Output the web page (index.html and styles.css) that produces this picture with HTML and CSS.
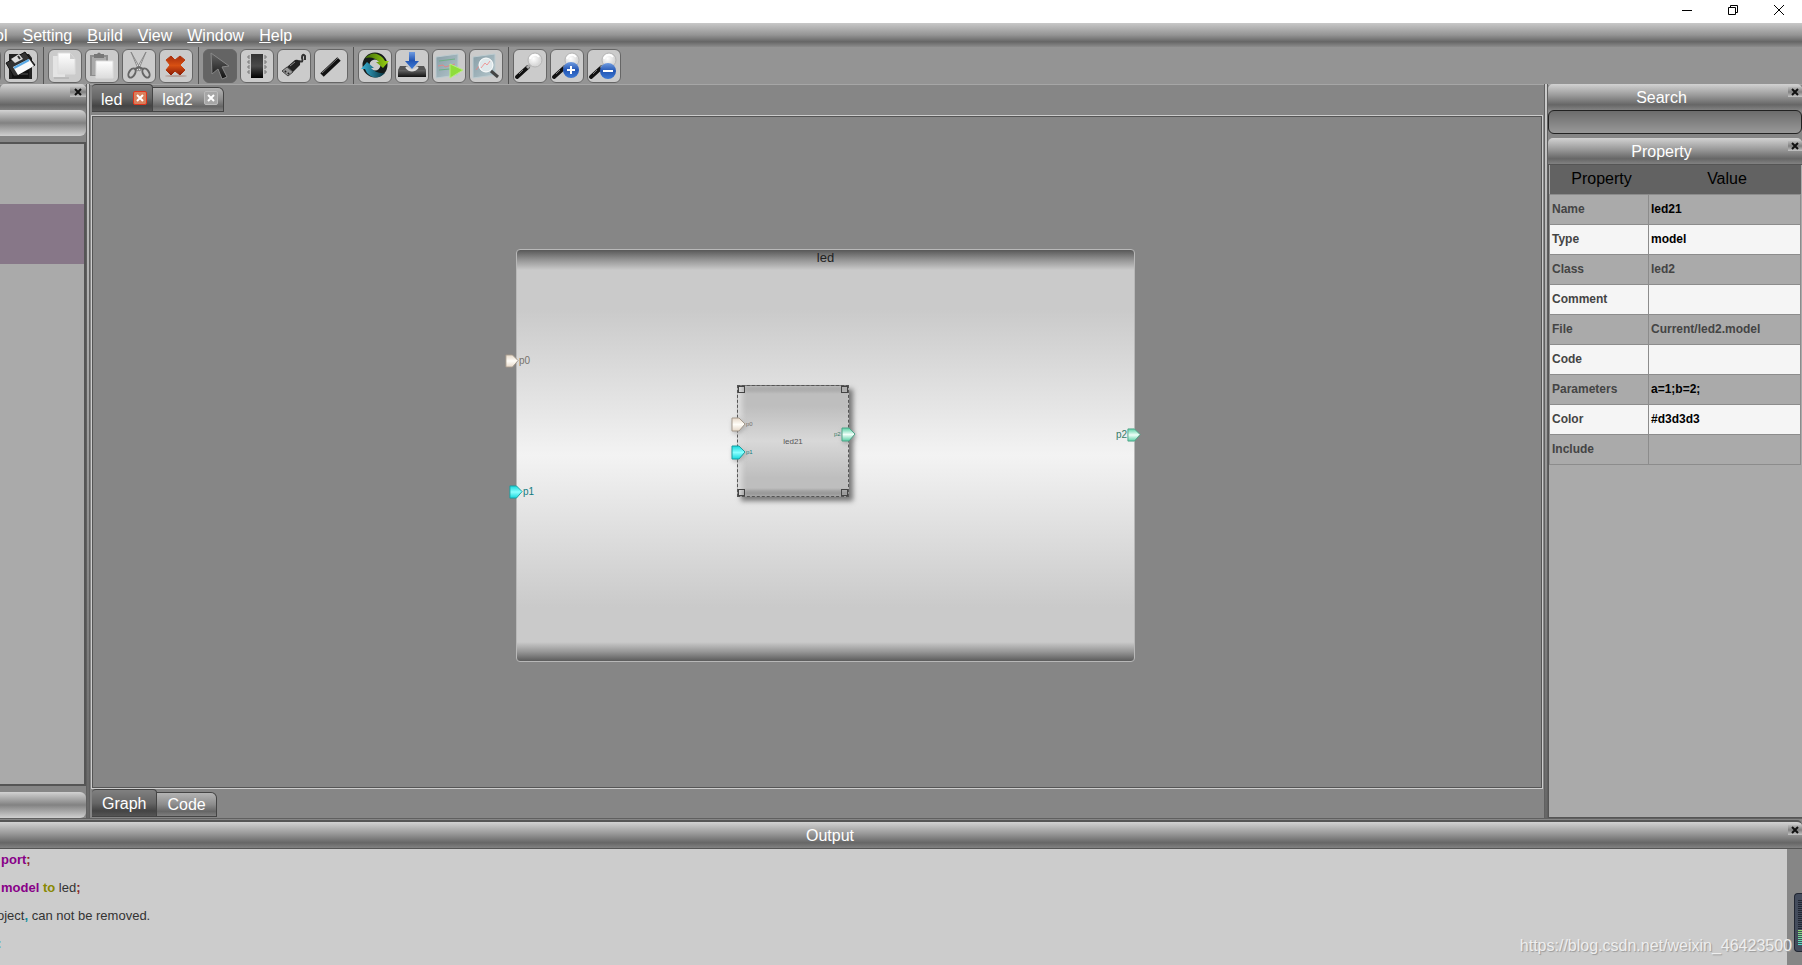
FILE: index.html
```html
<!DOCTYPE html>
<html lang="en">
<head>
    <meta charset="UTF-8">
    <meta name="viewport" content="width=device-width, initial-scale=1.0">
    <title>led</title>
    <link rel="stylesheet" href="styles.css">
</head>
<body>
    <!-- shared gradients and shapes -->
    <svg class="defs" aria-hidden="true">
        <defs>
            <linearGradient id="paper" x1="0" y1="0" x2="0" y2="1"><stop offset="0" stop-color="#fff"/><stop offset="1" stop-color="#dcdcdc"/></linearGradient>
            <linearGradient id="red" x1="0" y1="0" x2="0" y2="1"><stop offset="0" stop-color="#a82e0c"/><stop offset=".5" stop-color="#d85012"/><stop offset="1" stop-color="#8c1c06"/></linearGradient>
            <linearGradient id="dark" x1="0" y1="0" x2="0" y2="1"><stop offset="0" stop-color="#666"/><stop offset="1" stop-color="#111"/></linearGradient>
            <linearGradient id="chip" x1="0" y1="0" x2="0" y2="1"><stop offset="0" stop-color="#333"/><stop offset=".5" stop-color="#4a4a4a"/><stop offset="1" stop-color="#000"/></linearGradient>
            <linearGradient id="blue" x1="0" y1="0" x2="0" y2="1"><stop offset="0" stop-color="#6f9be0"/><stop offset=".5" stop-color="#2356b4"/><stop offset="1" stop-color="#3d79d4"/></linearGradient>
            <linearGradient id="green" x1="0" y1="0" x2="1" y2="0"><stop offset="0" stop-color="#3f6b06"/><stop offset="1" stop-color="#9ad413"/></linearGradient>
            <linearGradient id="teal" x1="0" y1="0" x2="1" y2="0"><stop offset="0" stop-color="#3bb4d8"/><stop offset="1" stop-color="#06323f"/></linearGradient>
            <linearGradient id="chart" x1="0" y1="0" x2="1" y2="1"><stop offset="0" stop-color="#879da6"/><stop offset="1" stop-color="#b4c6cc"/></linearGradient>
            <radialGradient id="lens" cx=".4" cy=".4"><stop offset="0" stop-color="#fff"/><stop offset="1" stop-color="#d8d8d8"/></radialGradient>
            <linearGradient id="pinCream" x1="0" y1="0" x2="0" y2="1"><stop offset="0" stop-color="#e6d8c8"/><stop offset=".5" stop-color="#fffdf8"/><stop offset="1" stop-color="#e6d8c8"/></linearGradient>
            <linearGradient id="pinCyan" x1="0" y1="0" x2="0" y2="1"><stop offset="0" stop-color="#14d8dc"/><stop offset=".5" stop-color="#8bffff"/><stop offset="1" stop-color="#14d8dc"/></linearGradient>
            <linearGradient id="pinGreen" x1="0" y1="0" x2="0" y2="1"><stop offset="0" stop-color="#58cfa4"/><stop offset=".5" stop-color="#f0fff9"/><stop offset="1" stop-color="#58cfa4"/></linearGradient>
            <symbol id="glass" viewBox="0 0 32 32">
                <path d="M3 27L14 17" stroke="#111" stroke-width="4" stroke-linecap="round"/>
                <path d="M5 24L9 20" stroke="#777" stroke-width="1"/>
                <path d="M13 18L16 15" stroke="#aaa" stroke-width="3"/>
                <circle cx="21" cy="10" r="7" fill="url(#lens)" stroke="#b4b4b4"/>
                <path d="M16 9A5 5 0 0 1 25 7" fill="none" stroke="#fff" stroke-width="2"/>
            </symbol>
        </defs>
    </svg>

    <header class="titlebar">
        <button class="win-btn" aria-label="Minimize"><svg width="12" height="12"><path d="M1 6.500H11" stroke="#000"/></svg></button>
        <button class="win-btn" aria-label="Restore"><svg width="12" height="12"><path d="M1.500 3.500H8.500V10.500H1.500ZM3.500 3V1.500H10.500V8.500H9" fill="none" stroke="#000"/></svg></button>
        <button class="win-btn" aria-label="Close"><svg width="12" height="12"><path d="M1 1L11 11M11 1L1 11" stroke="#000"/></svg></button>
    </header>

    <nav class="menubar">
        <button>ol</button>
        <button><u>S</u>etting</button>
        <button><u>B</u>uild</button>
        <button><u>V</u>iew</button>
        <button><u>W</u>indow</button>
        <button><u>H</u>elp</button>
    </nav>

    <div class="toolbar">
        <button aria-label="Save"></button>
        <button aria-label="Save all">
            <svg viewBox="0 0 32 32"><path d="M4 4H24L27 8V29H4Z" fill="#222"/><path d="M7 20H24V28H7Z" fill="#111"/><path d="M9 24H23" stroke="#555"/><path d="M1 13L20 2L30 15L12 26Q9 27 8 25Z" fill="#333" stroke="#111"/><path d="M6 9L14 4L18 9L10 13Z" fill="#ddd"/><path d="M13 6L15 9" stroke="#333" stroke-width="2"/><path d="M8 17L24 9L29 16L13 25Z" fill="#fafafa"/><path d="M9 18L24 10" stroke="#5aaae6" stroke-width="2"/></svg>
        </button>
        <span class="sep"></span>
        <button aria-label="Copy">
            <svg viewBox="0 0 32 32"><path d="M4 6H16V27H4Z" fill="#e4e4e4"/><path d="M5 28H20" stroke="#aaa"/><path d="M9 3H21L26 9V24H9Z" fill="url(#paper)" stroke="#ddd"/><path d="M21 3V9H26Z" fill="#ccc"/></svg>
        </button>
        <button aria-label="Paste">
            <svg viewBox="0 0 32 32"><path d="M4 5H22V26H4Z" fill="#8d8d8d"/><path d="M6 7H20V25H6Z" fill="#aaa"/><path d="M8 4H11Q13 1 15 4H18V8H8Z" fill="#777"/><path d="M10 11H27V28H10Z" fill="url(#paper)" stroke="#ddd"/></svg>
        </button>
        <button aria-label="Cut">
            <svg viewBox="0 0 32 32"><path d="M8 2L18 20L16 21ZM23 2L13 20L15 21Z" fill="#eee" stroke="#888"/><g fill="none" stroke="#666" stroke-width="2"><ellipse cx="9" cy="23" rx="3" ry="5" transform="rotate(30 9 23)"/><ellipse cx="23" cy="23" rx="3" ry="5" transform="rotate(-30 23 23)"/><path d="M12 19L16 17L20 19"/></g></svg>
        </button>
        <button aria-label="Delete">
            <svg viewBox="0 0 32 32"><ellipse cx="16" cy="26" rx="11" ry="1" fill="#b5a09a"/><path d="M11 6L15 10L20 6L25 10L20 15L25 20L20 25L15 21L11 25L6 20L10 15L6 10Z" fill="url(#red)" stroke="url(#red)" stroke-linejoin="round"/></svg>
        </button>
        <span class="sep"></span>
        <button class="active" aria-label="Select">
            <svg viewBox="0 0 32 32"><path d="M7 3L25 16L18 17L23 27L18 29L14 19L8 24Z" fill="url(#dark)" stroke="#888"/></svg>
        </button>
        <button aria-label="Module">
            <svg viewBox="0 0 32 32"><path d="M10 4H22V28H10Z" fill="url(#chip)"/><path d="M9 6H7V8H9M9 11H7V13H9M9 16H7V18H9M9 21H7V23H9M23 6H25V8H23M23 11H25V13H23M23 16H25V18H23M23 21H25V23H23" fill="none" stroke="#777"/></svg>
        </button>
        <button aria-label="Port">
            <svg viewBox="0 0 32 32"><path d="M21 11Q26 13 24 8Q24 3 27 6V10" fill="none" stroke="#333" stroke-width="2"/><path d="M9 17L17 10Q23 9 22 15L15 22Z" fill="#222"/><path d="M4 21L9 17L15 22L10 26Z" fill="#999" stroke="#444"/><path d="M7 22L8 21M10 24L11 23" stroke="#222" stroke-width="2"/><path d="M12 16L17 12" stroke="#888"/></svg>
        </button>
        <button aria-label="Link">
            <svg viewBox="0 0 32 32"><path d="M7 25L24 9" stroke="#111" stroke-width="5"/><path d="M7 23L23 8" stroke="#777"/></svg>
        </button>
        <span class="sep"></span>
        <button aria-label="Refresh">
            <svg viewBox="0 0 32 32"><circle cx="16" cy="15" r="9" fill="none" stroke="#151b1b" stroke-width="7"/><path d="M6 8Q15-1 24 8L26 11H30L24 18L17 12H20Q15 6 6 8Z" fill="url(#green)"/><path d="M26 23Q17 32 8 23L6 19H2L8 12L15 18H12Q17 24 26 23Z" fill="url(#teal)"/></svg>
        </button>
        <button aria-label="Import">
            <svg viewBox="0 0 32 32"><path d="M4 16H11Q16 25 21 16H28L30 20H2Z" fill="#555"/><path d="M2 20H30V27H2Z" fill="url(#dark)"/><path d="M10 17Q16 24 22 17" fill="none" stroke="#ddd" stroke-width="2"/><path d="M13 2H19V11H23L16 19L9 11H13Z" fill="url(#blue)"/></svg>
        </button>
        <button aria-label="Run">
            <svg viewBox="0 0 32 32"><path d="M3 7L25 4V25L3 28Z" fill="url(#chart)" stroke="#bccbd0"/><path d="M6 11L22 9M6 20L17 19" stroke="#6faf84"/><path d="M5 16L10 15L12 17L22 14" fill="none" stroke="#d88"/><path d="M17 14L30 20L17 28Z" fill="#8fdd3c" stroke="#b8ee7c"/></svg>
        </button>
        <button aria-label="Inspect">
            <svg viewBox="0 0 32 32"><path d="M3 7L25 4V25L3 28Z" fill="url(#chart)" stroke="#bccbd0"/><path d="M6 20L10 15L13 18" fill="none" stroke="#d88"/><circle cx="16" cy="15" r="7" fill="#dfe8eb" stroke="#fff"/><path d="M11 18L15 13L17 15L20 11" fill="none" stroke="#e99"/><path d="M21 21L28 27" stroke="#444" stroke-width="3"/></svg>
        </button>
        <span class="sep"></span>
        <button aria-label="Zoom"><svg viewBox="0 0 32 32"><use href="#glass"/></svg></button>
        <button aria-label="Zoom in"><svg viewBox="0 0 32 32"><use href="#glass"/><circle cx="20" cy="20" r="8" fill="url(#blue)"/><path d="M20 16V24M16 20H24" stroke="#fff" stroke-width="2"/></svg></button>
        <button aria-label="Zoom out"><svg viewBox="0 0 32 32"><use href="#glass"/><circle cx="20" cy="21" r="8" fill="url(#blue)"/><path d="M15 21H25" stroke="#fff" stroke-width="2"/></svg></button>
    </div>

    <main class="workspace">
        <aside class="left-dock">
            <div class="dock-title"><button class="dock-close" aria-label="Close panel"><svg width="8" height="8"><path d="M1 1L7 7M7 1L1 7" stroke="#111" stroke-width="2"/></svg></button></div>
            <button class="toolbox-head" aria-label="Toolbox section"></button>
            <div class="toolbox-list"><div class="toolbox-item selected"></div></div>
            <button class="toolbox-head" aria-label="Toolbox section"></button>
        </aside>
        <div class="splitter"></div>

        <section class="editor">
            <div class="tabs top">
                <div class="tab active"><button class="tab-label">led</button><button class="tab-close" aria-label="Close led"><svg width="8" height="8"><path d="M1 1L7 7M7 1L1 7" stroke="#fff" stroke-width="2"/></svg></button></div>
                <div class="tab"><button class="tab-label">led2</button><button class="tab-close" aria-label="Close led2"><svg width="8" height="8"><path d="M1 1L7 7M7 1L1 7" stroke="#fff" stroke-width="2"/></svg></button></div>
            </div>
            <div class="canvas">
                <div class="model">
                    <div class="model-title">led</div>
                </div>
                <div class="pin model-p0 cream"><svg viewBox="0 0 15 15"><path d="M1 1H8L14 7L8 14H1Z" fill="url(#pinCream)" stroke="#a3988b"/></svg>p0</div>
                <div class="pin model-p1 cyan"><svg viewBox="0 0 15 15"><path d="M1 1H8L14 7L8 14H1Z" fill="url(#pinCyan)" stroke="#1a9da0"/></svg>p1</div>
                <div class="pin model-p2 green">p2<svg viewBox="0 0 15 15"><path d="M1 1H8L14 7L8 14H1Z" fill="url(#pinGreen)" stroke="#4fa488"/></svg></div>
                <div class="instance">
                    <span>led21</span>
                    <i class="handle nw"></i><i class="handle ne"></i><i class="handle sw"></i><i class="handle se"></i>
                </div>
                <div class="pin small inst-p0 cream"><svg viewBox="0 0 15 15"><path d="M1 1H8L14 7L8 14H1Z" fill="url(#pinCream)" stroke="#a3988b"/></svg>p0</div>
                <div class="pin small inst-p1 cyan"><svg viewBox="0 0 15 15"><path d="M1 1H8L14 7L8 14H1Z" fill="url(#pinCyan)" stroke="#1a9da0"/></svg>p1</div>
                <div class="pin small inst-p2 green">p2<svg viewBox="0 0 15 15"><path d="M1 1H8L14 7L8 14H1Z" fill="url(#pinGreen)" stroke="#4fa488"/></svg></div>
            </div>
            <div class="tabs bottom">
                <div class="tab active"><button class="tab-label">Graph</button></div>
                <div class="tab"><button class="tab-label">Code</button></div>
            </div>
        </section>
        <div class="splitter"></div>

        <aside class="right-dock">
            <div class="dock-title"><label for="search">Search</label><button class="dock-close" aria-label="Close search"><svg width="8" height="8"><path d="M1 1L7 7M7 1L1 7" stroke="#111" stroke-width="2"/></svg></button></div>
            <input id="search" class="search" type="text">
            <div class="dock-title">Property<button class="dock-close" aria-label="Close property"><svg width="8" height="8"><path d="M1 1L7 7M7 1L1 7" stroke="#111" stroke-width="2"/></svg></button></div>
            <div class="property">
                <table>
                    <thead><tr><th>Property</th><th>Value</th></tr></thead>
                    <tbody>
                        <tr><td>Name</td><td>led21</td></tr>
                        <tr><td>Type</td><td>model</td></tr>
                        <tr><td>Class</td><td class="readonly">led2</td></tr>
                        <tr><td>Comment</td><td></td></tr>
                        <tr><td>File</td><td class="readonly">Current/led2.model</td></tr>
                        <tr><td>Code</td><td></td></tr>
                        <tr><td>Parameters</td><td>a=1;b=2;</td></tr>
                        <tr><td>Color</td><td>#d3d3d3</td></tr>
                        <tr><td>Include</td><td></td></tr>
                    </tbody>
                </table>
            </div>
        </aside>
    </main>

    <section class="output">
        <div class="dock-title">Output<button class="dock-close" aria-label="Close output"><svg width="8" height="8"><path d="M1 1L7 7M7 1L1 7" stroke="#111" stroke-width="2"/></svg></button></div>
        <div class="output-body">
            <div class="log">
                <p><b class="kw">port</b><b class="semi">;</b></p>
                <p><b class="kw">model</b> <b class="to">to</b> led<b class="semi">;</b></p>
                <p class="cut">oject<b class="punct">,</b> can not be removed.</p>
                <p class="cut"><b class="punct">:</b></p>
            </div>
            <div class="scrollbar"><div class="meter"></div></div>
        </div>
        <div class="watermark">https://blog.csdn.net/weixin_46423500</div>
    </section>
</body>
</html>
```
FILE: styles.css
```css
* {
    box-sizing: border-box;
}

body {
    font-family: "Liberation Sans", Arial, sans-serif;
    font-size: 16px;
    margin: 0;
    height: 100vh;
    display: flex;
    flex-direction: column;
    overflow: hidden;
    background-color: #868686;
    color: #fff;
}

button {
    font: inherit;
    color: inherit;
    background: none;
    border: none;
    padding: 0;
    margin: 0;
}

.defs {
    position: absolute;
    width: 0;
    height: 0;
}

/* window frame */
.titlebar {
    height: 23px;
    flex: none;
    display: flex;
    justify-content: flex-end;
    background: #fff;
}

.win-btn {
    width: 46px;
    height: 20px;
    display: flex;
    align-items: center;
    justify-content: center;
}

.menubar {
    height: 24px;
    flex: none;
    display: flex;
    align-items: center;
    gap: 15px;
    padding-top: 1px;
    margin-left: -5px;
    background: linear-gradient(#c8c8c8, #949494 50%, #666 78%, #8c8c8c);
}

.toolbar {
    height: 38px;
    flex: none;
    display: flex;
    align-items: center;
    gap: 3px;
    margin-left: -33px;
    background: #949494;
    border-bottom: 1px solid #a6a6a6;
}

.toolbar button {
    width: 34px;
    height: 34px;
    border: 1px solid #666;
    border-radius: 6px;
    background: #cbcbcb;
}

.toolbar button.active {
    background: #646464;
}

.toolbar svg {
    display: block;
    width: 32px;
    height: 32px;
}

.sep {
    width: 1px;
    height: 37px;
    margin: 0 1px 0 2px;
    background: #555;
}

/* docks */
.workspace {
    flex: 1;
    min-height: 0;
    display: flex;
    margin-top: -1px;
}

.dock-title {
    position: relative;
    height: 26px;
    flex: none;
    display: flex;
    align-items: center;
    justify-content: center;
    padding: 1px 27px 0 0;
    border-radius: 5px 5px 0 0;
    background: linear-gradient(#d2d2d2, #989898 45%, #666 80%, #828282);
}

.dock-close {
    position: absolute;
    right: 0;
    top: 3px;
    width: 14px;
    height: 10px;
    display: flex;
    align-items: center;
    justify-content: center;
    background: linear-gradient(#bbb, #808080 50%, #c4c4c4);
}

.left-dock {
    width: 86px;
    display: flex;
    flex-direction: column;
}

.left-dock .dock-close {
    width: 16px;
}

.toolbox-head {
    height: 26px;
    flex: none;
    border-radius: 0 6px 6px 0;
    background: linear-gradient(#d2d2d2, #828282 50%, #9a9a9a 65%, #d0d0d0);
}

.toolbox-list {
    flex: 1;
    margin: 6px 0;
    padding-top: 60px;
    background: #aaa;
    border: 2px solid #555;
    border-left: none;
}

.toolbox-item.selected {
    height: 60px;
    background: #877788;
}

.splitter {
    width: 4px;
    flex: none;
    border: 1px solid #606060;
    border-width: 0 1px;
    background: linear-gradient(#ccc, #666);
}

.editor {
    flex: 1;
    min-width: 0;
    padding: 0 2px;
    display: flex;
    flex-direction: column;
}

.tabs {
    display: flex;
    flex: none;
}

.tabs.top {
    height: 32px;
    align-items: flex-end;
    padding-bottom: 4px;
}

.tabs.bottom {
    height: 30px;
    align-items: flex-end;
    padding-bottom: 1px;
}

.tab {
    height: 25px;
    display: flex;
    align-items: center;
    gap: 11px;
    padding: 1px 5px 0 9px;
    border: 1px solid #444;
    border-left: none;
    border-radius: 0 6px 0 0;
    background: linear-gradient(#b4b4b4, #8c8c8c 50%, #666 80%, #808080);
}

.tab.active {
    height: 28px;
    padding-top: 3px;
    border-radius: 4px 4px 0 0;
    background: linear-gradient(#808080, #666 50%, #444 80%, #555);
}

.bottom .tab {
    padding: 1px 10px 0;
}

.tab-close {
    width: 14px;
    height: 14px;
    margin-bottom: 4px;
    display: flex;
    align-items: center;
    justify-content: center;
    border: 1px solid #bbb;
    border-radius: 2px;
    background: #a6a6a6;
}

.tab.active .tab-close {
    border-color: #e0341c;
    background: #d9805c;
}

/* drawing area */
.canvas {
    position: relative;
    flex: 1;
    overflow: hidden;
    border: 1px solid #555;
    outline: 1px solid #ccc;
    background: #868686;
}

.model {
    position: absolute;
    left: 423px;
    top: 132px;
    width: 619px;
    height: 413px;
    border: 1px solid #b8b8b8;
    border-radius: 4px;
    background: linear-gradient(#585858, #959595 10px, #cacaca 20px, #cacaca 60px, #f3f3f3 50%, #cacaca 357px, #cacaca 392px, #959595 402px, #5c5c5c);
}

.model-title {
    text-align: center;
    font-size: 13px;
    line-height: 15px;
    color: #222;
}

.pin {
    position: absolute;
    display: flex;
    align-items: center;
    font-size: 10px;
    line-height: 15px;
}

.pin svg {
    width: 14px;
    height: 14px;
}

.pin.small {
    font-size: 6px;
}

.pin.small svg {
    width: 15px;
    height: 15px;
    filter: drop-shadow(1px 2px 2px #8888);
}

.cream { color: #77736c; }
.cyan { color: #137c80; }
.green { color: #377c68; }

.model-p0 { left: 412px; top: 236px; }
.model-p1 { left: 416px; top: 367px; }
.model-p2 { left: 1023px; top: 310px; }
.inst-p0 { left: 638px; top: 300px; }
.inst-p1 { left: 638px; top: 328px; }
.inst-p2 { left: 741px; top: 310px; }

.instance {
    position: absolute;
    left: 644px;
    top: 268px;
    width: 112px;
    height: 112px;
    display: flex;
    align-items: center;
    justify-content: center;
    border: 1px dashed #555;
    font-size: 8px;
    color: #555;
    background: linear-gradient(#989898, #bebebe 8px, #bebebe 20px, #d8d8d8 50%, #bebebe 92px, #bebebe 102px, #777);
    box-shadow: 4px 4px 5px #777, inset 4px 0 5px #ddd;
}

.handle {
    position: absolute;
    width: 7px;
    height: 7px;
    border: 1px solid #444;
}

.nw { left: 0; top: 0; }
.ne { right: 0; top: 0; }
.sw { left: 0; bottom: 0; }
.se { right: 0; bottom: 0; }

/* property panel */
.right-dock {
    width: 254px;
    flex: none;
    display: flex;
    flex-direction: column;
}

.search {
    height: 24px;
    margin: 0 0 4px;
    border: 1px solid #222;
    border-radius: 6px;
    background: linear-gradient(#6c6c6c, #989898);
    font: inherit;
    color: #fff;
}

.property {
    flex: 1;
    padding-right: 1px;
    border: 1px solid #555;
    border-right: none;
    background: #aaa;
}

.property table {
    width: 100%;
    table-layout: fixed;
    border-collapse: collapse;
    font-size: 12px;
    font-weight: bold;
}

.property th {
    height: 29px;
    padding: 0 0 0 5px;
    font-size: 16px;
    font-weight: normal;
    color: #000;
    background: #626262;
}

.property th:first-child {
    width: 99px;
}

.property td {
    height: 30px;
    padding: 0 2px;
    border: 1px solid #8c8c8c;
    color: #000;
}

.property td:first-child,
.property td.readonly {
    color: #444;
}

.property tbody tr:nth-child(even) {
    background: #f5f5f5;
}

/* output panel */
.output {
    position: relative;
    height: 147px;
    flex: none;
    display: flex;
    flex-direction: column;
    border-top: 1px solid #606060;
    padding-top: 1px;
}

.output .dock-title {
    height: 29px;
    margin-left: -142px;
    padding-right: 0;
    border-top: 2px solid #555;
    border-bottom: 1px solid #555;
}

.output-body {
    flex: 1;
    display: flex;
    background: #ccc;
}

.log {
    flex: 1;
    padding: 3px 0 0 1px;
    font-size: 13px;
    line-height: 16px;
    color: #333;
}

.log p {
    margin: 0 0 12px;
}

.log .cut {
    margin-left: -4px;
}

.kw { color: #808; }
.to { color: #880; }
.semi { color: #822; }
.punct { color: #088c9c; }

.scrollbar {
    width: 15px;
    padding: 44px 0 0 7px;
    background: #868686;
}

.meter {
    height: 59px;
    border: 1px solid #222733;
    border-right: none;
    border-radius: 4px 0 0 4px;
    padding: 6px 0 6px 3px;
    background: #444c5c;
}

.meter::before {
    content: "";
    display: block;
    height: 45px;
    background: repeating-linear-gradient(transparent 0 1px, #444c5c 1px 2px), linear-gradient(#222733 66%, #8fe06c 66%, #4fdcc8);
}

.watermark {
    position: absolute;
    right: 10px;
    bottom: 9px;
    line-height: 20px;
    color: #eee;
    text-shadow: 1px 1px 1px #999;
}
```
